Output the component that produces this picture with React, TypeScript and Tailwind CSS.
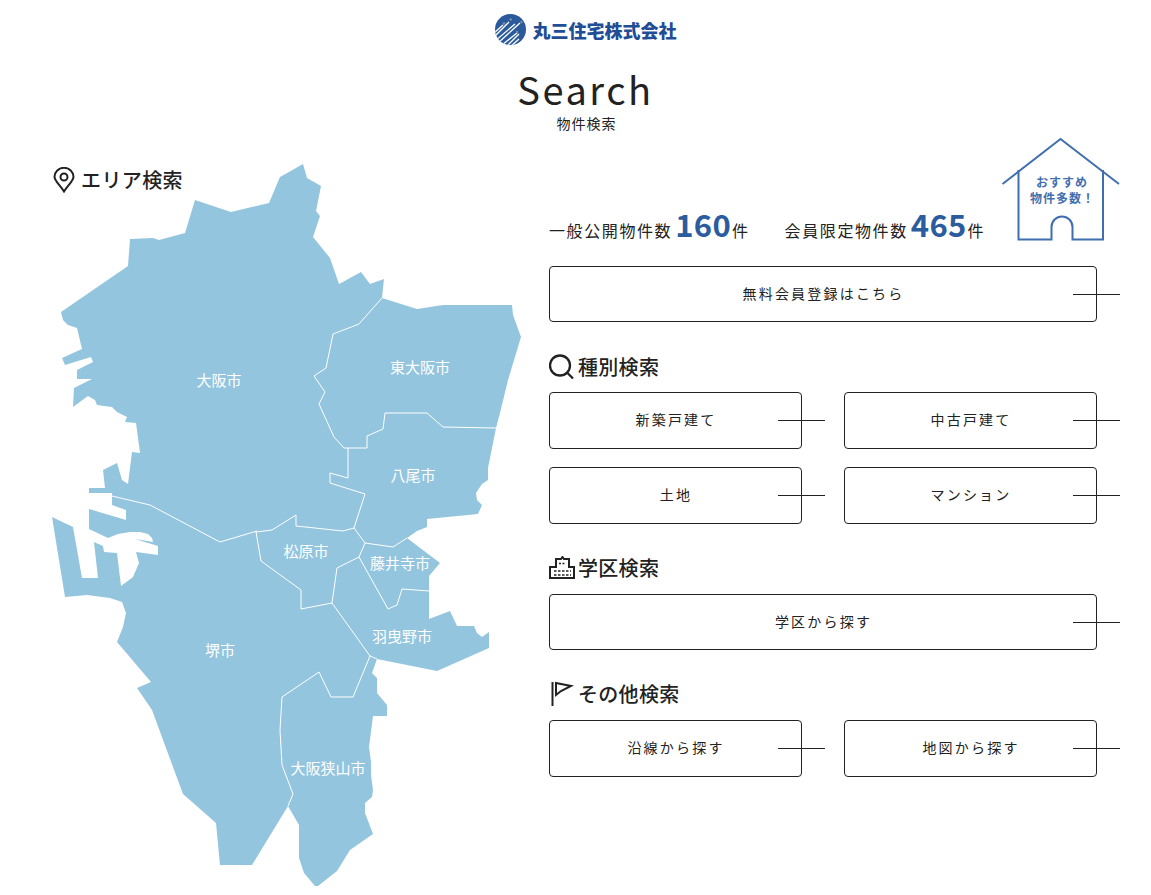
const OUTLINE = '61,312 128,266 130,239 153,238 159,240 185,233 195,200 231,212 269,203 280,177 303,164 307,178 321,186 316,211 320,216 313,237 330,258 339,284 361,272 370,284 384,279 382,298 417,309 443,305 512,305 513,315 521,337 508,380 500,413 496,428 488,468 488,480 482,484 476,493 477,500 482,505 478,514 427,519 427,527 417,531 407,538 440,563 429,576 429,619 450,611 457,626 474,626 477,633 482,637 489,632 489,648 437,671 377,659 372,673 377,678 377,693 387,705 387,716 373,716 369,747 371,762 371,775 373,790 372,797 365,803 365,813 373,834 350,850 337,871 318,886 315,886 304,873 299,858 299,825 288,806 252,865 220,865 216,823 183,794 152,710 137,688 151,682 117,642 123,627 126,613 122,602 110,598 87,595 65,597 52,517 73,527 82,578 98,578 94,542 103,546 104,552 117,553 121,586 133,577 139,563 136,552 158,555 158,546 135,539 153,542 152,538 148,534 140,532 130,532 118,534 108,538 89,529 89,509 126,520 126,510 112,505 112,493 89,493 89,488 105,488 103,470 117,463 122,480 128,484 132,452 140,453 136,423 125,422 127,417 117,412 112,407 97,405 95,400 88,396 73,407 74,388 92,379 77,379 77,370 93,362 91,357 65,365 62,358 82,349 77,328 68,325 63,320'

const BORDERS = [
  '382,298 359,324 333,334 326,368 314,376 325,392 319,404 334,437 344,448 367,448 367,436 383,429 385,413 427,413 443,427 496,428',
  '348,448 348,478 330,473 330,483 365,494 354,528 343,531 296,526 296,515 272,530 256,532',
  '112,496 150,505 220,542 257,531',
  '354,528 365,543 393,547 407,538',
  '365,543 359,557 337,568 332,603 301,609 301,590 261,561 256,532',
  '359,557 388,609 397,605 402,589 429,591',
  '332,603 370,656 377,659',
  '370,656 353,697 331,697 319,672 282,697 280,730 282,765 293,794 288,806',
]

const LABELS = [
  { name: '大阪市', x: 219, y: 381 },
  { name: '東大阪市', x: 420, y: 368 },
  { name: '八尾市', x: 413, y: 476 },
  { name: '松原市', x: 306, y: 552 },
  { name: '藤井寺市', x: 400, y: 564 },
  { name: '羽曳野市', x: 402, y: 637 },
  { name: '堺市', x: 220, y: 651 },
  { name: '大阪狭山市', x: 328, y: 769 },
]

const LinkButton = ({ label, className = '' }: { label: string, className?: string }) => (
  <a className={`relative flex items-center justify-center border border-[#222] rounded bg-white pl-px pb-[2px] text-[14px] tracking-[2.2px] text-[#222] ${className}`}>
    {label}
    <span className="absolute -right-[24px] top-[27px] w-[47px] h-px bg-[#222]" />
  </a>
)

const SectionTitle = ({ icon, label, className = '' }: { icon: React.ReactNode, label: string, className?: string }) => (
  <h2 className={`flex items-center h-[28px] text-[20px] tracking-[0.3px] font-medium text-[#222] ${className}`}>
    {icon}
    {label}
  </h2>
)

const Logo = () => (
  <div className="flex items-center h-[31px] gap-[7px]">
    <svg width="31" height="31" viewBox="0 0 31 31">
      <defs>
        <clipPath id="logo-disc"><circle cx="15.5" cy="15.5" r="15.5" /></clipPath>
      </defs>
      <g clipPath="url(#logo-disc)">
        <rect width="31" height="31" fill="#2a5a9c" />
        <g stroke="#fff" strokeWidth="1.3">
          <path d="M-2 20 L8 11" />
          <path d="M-2 24 L14 8" />
          <path d="M0 27 L20 10" />
          <path d="M3 29 L25 9" />
          <path d="M7 31 L22 19" />
          <path d="M11 33 L24 20" />
          <path d="M15 33 L24 25" />
        </g>
        <g fill="#7d8ea8">
          <circle cx="9" cy="9.5" r="1.2" />
          <circle cx="15.7" cy="5.5" r="1.2" />
          <circle cx="26.5" cy="8" r="1.2" />
          <circle cx="22" cy="18" r="1.2" />
        </g>
      </g>
    </svg>
    <span className="text-[18px] leading-none font-black text-[#1f4e96]">丸三住宅株式会社</span>
  </div>
)

const Count = ({ label, value }: { label: string, value: string }) => (
  <p className="flex items-baseline text-[16px] tracking-[1.6px] text-[#222] leading-none">
    {label}
    <span className="ml-[3px] mr-px text-[31px] font-bold text-[#2b5c9e] tracking-[0.3px]">{value}</span>
    件
  </p>
)

const House = () => (
  <svg width="118" height="103" viewBox="0 0 118 103" className="ml-auto shrink-0 overflow-visible">
    <path d="M0.5 46 L58.5 1 L117 46" fill="none" stroke="#3f6fae" strokeWidth="2" />
    <path d="M16.5 32 V101.5 H49.5 V89 A10.5 10.5 0 0 1 70.5 89 V101.5 H101 V32" fill="none" stroke="#3f6fae" strokeWidth="2" />
    <text x="60" y="49" textAnchor="middle" fontSize="12" fontWeight="700" letterSpacing="1" fill="#3f6fae">おすすめ</text>
    <text x="60.5" y="65" textAnchor="middle" fontSize="12" fontWeight="700" letterSpacing="1" fill="#3f6fae">物件多数！</text>
  </svg>
)

const App = () => {
  return (
    <div className="w-[1151px] h-[895px] overflow-hidden bg-white font-['Noto_Sans_CJK_JP','Noto_Sans',sans-serif]">

      {/* Header */}
      <header className="flex flex-col items-center pl-5 pt-[14px]">
        <Logo />
        <h1 className="mt-[19px] text-[38px] leading-[50px] tracking-[2.5px] text-[#222]">Search</h1>
        <p className="mb-[6px] ml-[2px] text-[14px] leading-[18px] tracking-[1px] text-[#222]">物件検索</p>
      </header>

      <main className="flex h-[757px]">

        {/* Area map */}
        <section className="relative w-[549px] shrink-0">
          <h2 className="absolute left-[53px] top-[27px] flex items-center text-[20px] tracking-[0.4px] font-medium text-[#222]">
            <svg width="22" height="26" viewBox="0 0 22 26" className="mr-[6px]" fill="none" stroke="#222" strokeWidth="2">
              <path d="M11 24.5 C7 18 1.5 14 1.5 9.8 A9.5 9 0 0 1 20.5 9.8 C20.5 14 15 18 11 24.5 Z" />
              <circle cx="11" cy="10" r="3.5" />
            </svg>
            エリア検索
          </h2>
          <svg width="549" height="757" viewBox="0 138 549 757" className="block">
            <polygon points={OUTLINE} fill="#94c5de" />
            {BORDERS.map(points => (
              <polyline key={points} points={points} fill="none" stroke="#fff" strokeWidth="1" />
            ))}
            {LABELS.map(l => (
              <text key={l.name} x={l.x} y={l.y + 5} textAnchor="middle" fontSize="15" fill="#fff">{l.name}</text>
            ))}
          </svg>
        </section>

        {/* Search links */}
        <section className="w-[571px] shrink-0">
          <div className="flex items-end h-[103px]">
            <div className="flex gap-[35px] pb-[2px]">
              <Count label="一般公開物件数" value="160" />
              <Count label="会員限定物件数" value="465" />
            </div>
            <House />
          </div>

          <LinkButton label="無料会員登録はこちら" className="w-[548px] h-[56px] mt-[25px]" />

          <SectionTitle
            label="種別検索"
            className="mt-[31px] mb-[11px]"
            icon={
              <svg width="29" height="26" viewBox="0 0 29 26" className="shrink-0" fill="none" stroke="#222" strokeWidth="2.3">
                <circle cx="11" cy="11.5" r="10" />
                <path d="M18.5 19 L24 24.5" />
              </svg>
            }
          />
          <div className="grid grid-cols-[253px_253px] gap-x-[42px] gap-y-[18px]">
            <LinkButton label="新築戸建て" className="h-[57px]" />
            <LinkButton label="中古戸建て" className="h-[57px]" />
            <LinkButton label="土地" className="h-[57px]" />
            <LinkButton label="マンション" className="h-[57px]" />
          </div>

          <SectionTitle
            label="学区検索"
            className="mt-[30px] mb-[12px]"
            icon={
              <svg width="29" height="24" viewBox="0 0 29 24" className="shrink-0" fill="none" stroke="#222" strokeWidth="2">
                <path d="M1 22 V11 H7 V3 H12 L13.5 1 L15 3 H20 V11 H25 V22 H1 Z" />
                <path d="M5 15 H22 M5 19 H22" strokeDasharray="2.5 1.5" strokeWidth="1.6" />
                <path d="M10 7.5 H17" strokeDasharray="2 1.5" strokeWidth="1.4" />
              </svg>
            }
          />
          <LinkButton label="学区から探す" className="w-[548px] h-[56px]" />

          <SectionTitle
            label="その他検索"
            className="mt-[30px] mb-[12px]"
            icon={
              <svg width="29" height="26" viewBox="0 0 29 26" className="shrink-0" fill="none" stroke="#222" strokeWidth="2">
                <path d="M3.5 1 V25" />
                <path d="M7 2 L22 5 L12 10 L7 14 Z" />
              </svg>
            }
          />
          <div className="grid grid-cols-[253px_253px] gap-x-[42px]">
            <LinkButton label="沿線から探す" className="h-[57px]" />
            <LinkButton label="地図から探す" className="h-[57px]" />
          </div>
        </section>

      </main>
    </div>
  )
}

export default App
